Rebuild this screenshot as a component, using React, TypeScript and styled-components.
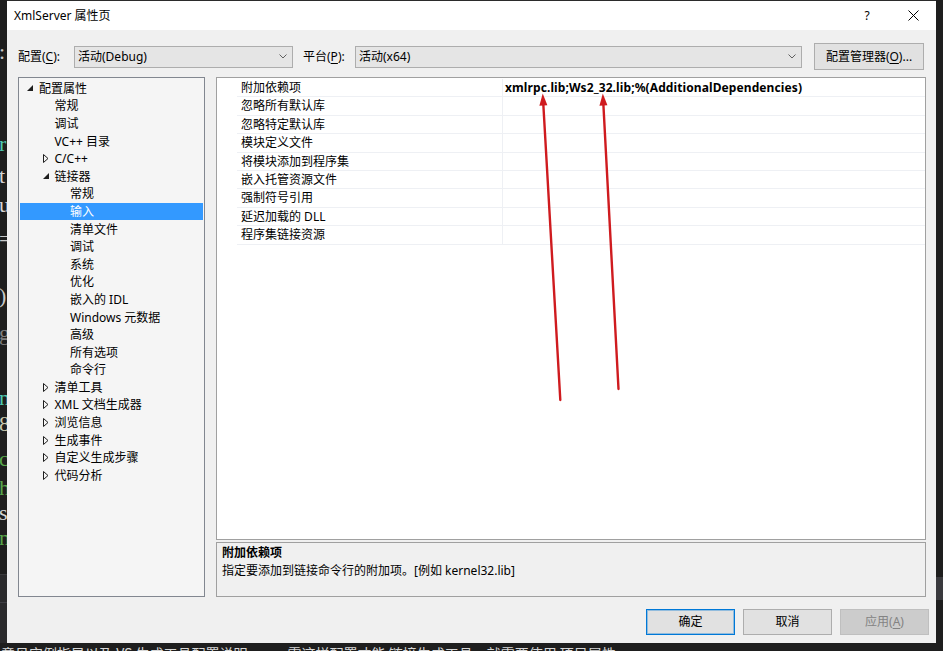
import React from "react";
import styled, { createGlobalStyle } from "styled-components";

const FONT = `"Noto Sans", "Noto Sans CJK SC", sans-serif`;

const Global = createGlobalStyle`
  html, body { margin: 0; padding: 0; background: #1e1e1e; }
  body { font-family: ${FONT}; }
  #root { width: 943px; height: 651px; }
`;

const Screen = styled.div`
  position: relative;
  width: 943px;
  height: 651px;
  overflow: hidden;
  display: grid;
  grid-template-columns: 7px 929px 7px;
  grid-template-rows: 1px 642px 8px;
  background: #1e1e1e;
  font-family: ${FONT};
  font-size: 12px;
  color: #000;
`;

/* ---------- background editor fragments ---------- */
const LeftStrip = styled.div`
  grid-column: 1;
  grid-row: 1 / span 2;
  display: flex;
  flex-direction: column;
  overflow: hidden;
  background: #1e1e1e;
`;

const Glyph = styled.div<{ $gap: number; $c: string }>`
  margin-top: ${(p) => p.$gap}px;
  height: 24px;
  line-height: 24px;
  margin-left: -1px;
  font-family: "Liberation Serif", "DejaVu Serif", serif;
  font-size: 22px;
  color: ${(p) => p.$c};
  white-space: nowrap;
`;

const StripPanel = styled.div`
  margin-top: auto;
  height: 68px;
  background: #2a2a2c;
  border-top: 1px solid #3a3a3d;
  display: flex;
  flex-direction: column;
`;

const StripLine = styled.div`
  margin-top: 27px;
  height: 1px;
  background: #3f3f44;
`;

const RightStrip = styled.div`
  grid-column: 3;
  grid-row: 1 / span 2;
  display: flex;
  flex-direction: column;
  background: #1e1e1e;
`;

const RightThumb = styled.div`
  margin-top: 577px;
  height: 23px;
  background: #3a3a3e;
`;

const TopSliver = styled.div`
  grid-column: 2;
  grid-row: 1;
  background: #2b2b2b;
`;

const BottomStrip = styled.div`
  grid-column: 1 / span 3;
  grid-row: 3;
  background: #1e1e1e;
  overflow: hidden;
  display: flex;
  gap: 40px;
  padding-left: 1px;
`;

const BottomText = styled.span`
  display: block;
  margin-top: 2px;
  font-size: 14px;
  line-height: 16px;
  color: #d8d8d8;
  white-space: nowrap;
  font-family: "Noto Sans CJK SC", sans-serif;
`;

/* ---------- dialog ---------- */
const Dialog = styled.div`
  grid-column: 2;
  grid-row: 2;
  display: flex;
  flex-direction: column;
  background: #f0f0f0;
`;

const TitleBar = styled.div`
  height: 29px;
  flex: none;
  background: #ffffff;
  display: flex;
  align-items: center;
  padding-left: 7px;
`;

const TitleText = styled.div`
  flex: 1;
  font-size: 12px;
  line-height: 16px;
  color: #000;
`;

const CaptionButton = styled.div`
  width: 46px;
  height: 29px;
  display: flex;
  align-items: center;
  justify-content: center;
  font-size: 12px;
  color: #000;
`;

const Body = styled.div`
  flex: 1;
  display: flex;
  flex-direction: column;
  padding: 13px 0 8px 11px;
`;

const ConfigRow = styled.div`
  height: 27px;
  display: flex;
  align-items: center;
`;

const Label = styled.div<{ $w: number; $ml?: number }>`
  width: ${(p) => p.$w}px;
  margin-left: ${(p) => p.$ml ?? 0}px;
  flex: none;
  line-height: 16px;
  white-space: nowrap;
`;

const Mn = styled.span`
  text-decoration: underline;
  text-underline-offset: 2px;
`;

const Combo = styled.div<{ $w: number }>`
  width: ${(p) => p.$w}px;
  height: 22px;
  flex: none;
  box-sizing: border-box;
  border: 1px solid #adadad;
  background: #e5e5e5;
  display: flex;
  align-items: center;
  justify-content: space-between;
  padding: 0 5px 0 3px;
  line-height: 20px;
`;

const PushButton = styled.div<{ $w: number; $h: number; $ml?: number; $kind?: "default" | "disabled" }>`
  width: ${(p) => p.$w}px;
  height: ${(p) => p.$h}px;
  margin-left: ${(p) => p.$ml ?? 0}px;
  flex: none;
  box-sizing: border-box;
  display: flex;
  align-items: center;
  justify-content: center;
  line-height: 16px;
  border: 1px solid
    ${(p) => (p.$kind === "default" ? "#0078d7" : p.$kind === "disabled" ? "#bfbfbf" : "#adadad")};
  box-shadow: ${(p) => (p.$kind === "default" ? "inset 0 0 0 1px rgba(0,120,215,0.35)" : "none")};
  background: ${(p) => (p.$kind === "disabled" ? "#cccccc" : "#e1e1e1")};
  color: ${(p) => (p.$kind === "disabled" ? "#838383" : "#000")};
`;

const Main = styled.div`
  margin-top: 7px;
  height: 520px;
  display: flex;
  gap: 11px;
`;

const Tree = styled.div`
  width: 187px;
  flex: none;
  box-sizing: border-box;
  border: 1px solid #828790;
  background: #f5f5f5;
  padding-top: 1.5px;
  display: flex;
  flex-direction: column;
`;

const TreeRow = styled.div<{ $level: number; $sel?: boolean }>`
  height: 17.6px;
  margin: 0 1px;
  display: flex;
  align-items: center;
  padding-left: ${(p) => 7 + p.$level * 15.5}px;
  background: ${(p) => (p.$sel ? "#3399ff" : "transparent")};
  color: ${(p) => (p.$sel ? "#ffffff" : "#000")};
  line-height: 17px;
  white-space: nowrap;
`;

const Expander = styled.span`
  width: 12px;
  flex: none;
  display: flex;
  align-items: center;
`;

const RightPane = styled.div`
  width: 710px;
  flex: none;
  display: flex;
  flex-direction: column;
  gap: 2px;
`;

const Grid = styled.div`
  flex: 1;
  box-sizing: border-box;
  border: 1px solid #a0a0a0;
  background: #ffffff;
  padding: 1px 0 0 20px;
  display: flex;
  flex-direction: column;
`;

const GridRow = styled.div`
  height: 18.4px;
  box-sizing: border-box;
  display: flex;
  border-bottom: 1px solid #eef0f4;
`;

const NameCell = styled.div`
  width: 266px;
  flex: none;
  box-sizing: border-box;
  border-right: 1px solid #eef0f4;
  padding-left: 4px;
  line-height: 17px;
  white-space: nowrap;
`;

const ValueCell = styled.div`
  flex: 1;
  padding-left: 2px;
  line-height: 17px;
  font-weight: 700;
  letter-spacing: 0.1px;
  white-space: nowrap;
`;

const Desc = styled.div`
  height: 55px;
  flex: none;
  box-sizing: border-box;
  border: 1px solid #a0a0a0;
  background: #f0f0f0;
  padding: 1px 5px 0;
`;

const DescTitle = styled.div`
  font-weight: 700;
  line-height: 18px;
`;

const DescText = styled.div`
  line-height: 18px;
`;

const Footer = styled.div`
  margin-top: 12px;
  display: flex;
  justify-content: flex-end;
  gap: 8px;
  padding-right: 7px;
`;

const Overlay = styled.svg`
  position: absolute;
  left: 0;
  top: 0;
  width: 943px;
  height: 651px;
  pointer-events: none;
`;

/* ---------- icons ---------- */
const Chevron = () => (
  <svg width="8" height="5" viewBox="0 0 8 5">
    <polyline points="0.5,0.5 4,4 7.5,0.5" fill="none" stroke="#606060" strokeWidth="1" />
  </svg>
);

const OpenTri = ({ sel }: { sel?: boolean }) => (
  <svg width="6" height="6" viewBox="0 0 6 6">
    <polygon points="6,0 6,6 0,6" fill={sel ? "#fff" : "#1e1e1e"} />
  </svg>
);

const ClosedTri = () => (
  <svg width="6" height="9" viewBox="0 0 6 9">
    <polygon points="0.5,0.5 5,4.5 0.5,8.5" fill="none" stroke="#1e1e1e" strokeWidth="1" />
  </svg>
);

const CloseX = () => (
  <svg width="11" height="11" viewBox="0 0 11 11">
    <path d="M0.5 0.5 L10.5 10.5 M10.5 0.5 L0.5 10.5" stroke="#000" strokeWidth="1" />
  </svg>
);

/* ---------- data ---------- */
type Node = { l: number; t: string; e?: "open" | "closed"; sel?: boolean };
const tree: Node[] = [
  { l: 0, t: "配置属性", e: "open" },
  { l: 1, t: "常规" },
  { l: 1, t: "调试" },
  { l: 1, t: "VC++ 目录" },
  { l: 1, t: "C/C++", e: "closed" },
  { l: 1, t: "链接器", e: "open" },
  { l: 2, t: "常规" },
  { l: 2, t: "输入", sel: true },
  { l: 2, t: "清单文件" },
  { l: 2, t: "调试" },
  { l: 2, t: "系统" },
  { l: 2, t: "优化" },
  { l: 2, t: "嵌入的 IDL" },
  { l: 2, t: "Windows 元数据" },
  { l: 2, t: "高级" },
  { l: 2, t: "所有选项" },
  { l: 2, t: "命令行" },
  { l: 1, t: "清单工具", e: "closed" },
  { l: 1, t: "XML 文档生成器", e: "closed" },
  { l: 1, t: "浏览信息", e: "closed" },
  { l: 1, t: "生成事件", e: "closed" },
  { l: 1, t: "自定义生成步骤", e: "closed" },
  { l: 1, t: "代码分析", e: "closed" },
];

const props: [string, string][] = [
  ["附加依赖项", "xmlrpc.lib;Ws2_32.lib;%(AdditionalDependencies)"],
  ["忽略所有默认库", ""],
  ["忽略特定默认库", ""],
  ["模块定义文件", ""],
  ["将模块添加到程序集", ""],
  ["嵌入托管资源文件", ""],
  ["强制符号引用", ""],
  ["延迟加载的 DLL", ""],
  ["程序集链接资源", ""],
];

const glyphCenters: [number, string, string][] = [
  [52, ":", "#c8c8c8"],
  [144, "r", "#4ec9b0"],
  [176, "t", "#d4d4d4"],
  [205, "u", "#d4d4d4"],
  [239, "=", "#c8c8c8"],
  [296, ")", "#c8c8c8"],
  [333, "g", "#808080"],
  [398, "n", "#4ec9b0"],
  [424, "8", "#c8c8b0"],
  [459, "c", "#57a64a"],
  [488, "h", "#57a64a"],
  [513, "s", "#d4d4d4"],
  [538, "n", "#57a64a"],
];

const glyphs = glyphCenters.map(([c, ch, col], i) => {
  const top = c - 12;
  const prevBottom = i === 0 ? 0 : glyphCenters[i - 1][0] - 12 + 24;
  return { gap: top - prevBottom, ch, col };
});

/* arrows */
const arrow = (tx: number, ty: number, hx: number, hy: number) => {
  const dx = hx - tx;
  const dy = hy - ty;
  const len = Math.hypot(dx, dy);
  const ux = dx / len;
  const uy = dy / len;
  const bx = hx - ux * 12;
  const by = hy - uy * 12;
  const px = -uy;
  const py = ux;
  return {
    line: { x1: tx, y1: ty, x2: bx + ux * 2, y2: by + uy * 2 },
    head: `${hx},${hy} ${bx + px * 4},${by + py * 4} ${bx - px * 4},${by - py * 4}`,
  };
};
const arrows = [arrow(560.3, 400, 542.7, 93.5), arrow(618.5, 389, 602.8, 93.5)];

export default function App() {
  return (
    <>
      <Global />
      <Screen>
        <LeftStrip>
          {glyphs.map((g, i) => (
            <Glyph key={i} $gap={g.gap} $c={g.col}>
              {g.ch}
            </Glyph>
          ))}
          <StripPanel>
            <StripLine />
          </StripPanel>
        </LeftStrip>
        <TopSliver />
        <RightStrip>
          <RightThumb />
        </RightStrip>
        <BottomStrip>
          <BottomText>意见实例指导以及 VS 生成工具配置说明</BottomText>
          <BottomText>需这样配置才能 链接生成工具，就需要使用 项目属性</BottomText>
        </BottomStrip>

        <Dialog>
          <TitleBar>
            <TitleText>XmlServer 属性页</TitleText>
            <CaptionButton>?</CaptionButton>
            <CaptionButton>
              <CloseX />
            </CaptionButton>
          </TitleBar>

          <Body>
            <ConfigRow>
              <Label $w={56}>
                配置(<Mn>C</Mn>):
              </Label>
              <Combo $w={219}>
                <span>活动(Debug)</span>
                <Chevron />
              </Combo>
              <Label $w={52} $ml={10}>
                平台(<Mn>P</Mn>):
              </Label>
              <Combo $w={447}>
                <span>活动(x64)</span>
                <Chevron />
              </Combo>
              <PushButton $w={110} $h={27} $ml={12}>
                配置管理器(<Mn>O</Mn>)...
              </PushButton>
            </ConfigRow>

            <Main>
              <Tree>
                {tree.map((n, i) => (
                  <TreeRow key={i} $level={n.l} $sel={n.sel}>
                    <Expander>
                      {n.e === "open" && <OpenTri sel={n.sel} />}
                      {n.e === "closed" && <ClosedTri />}
                    </Expander>
                    {n.t}
                  </TreeRow>
                ))}
              </Tree>

              <RightPane>
                <Grid>
                  {props.map(([name, value], i) => (
                    <GridRow key={i}>
                      <NameCell>{name}</NameCell>
                      <ValueCell>{value}</ValueCell>
                    </GridRow>
                  ))}
                </Grid>
                <Desc>
                  <DescTitle>附加依赖项</DescTitle>
                  <DescText>指定要添加到链接命令行的附加项。[例如 kernel32.lib]</DescText>
                </Desc>
              </RightPane>
            </Main>

            <Footer>
              <PushButton $w={89} $h={26} $kind="default">
                确定
              </PushButton>
              <PushButton $w={89} $h={26}>
                取消
              </PushButton>
              <PushButton $w={89} $h={26} $kind="disabled">
                应用(<Mn>A</Mn>)
              </PushButton>
            </Footer>
          </Body>
        </Dialog>

        <Overlay viewBox="0 0 943 651">
          {arrows.map((a, i) => (
            <g key={i}>
              <line {...a.line} stroke="#cf1b1f" strokeWidth="2.4" strokeLinecap="round" />
              <polygon points={a.head} fill="#cf1b1f" />
            </g>
          ))}
        </Overlay>
      </Screen>
    </>
  );
}
